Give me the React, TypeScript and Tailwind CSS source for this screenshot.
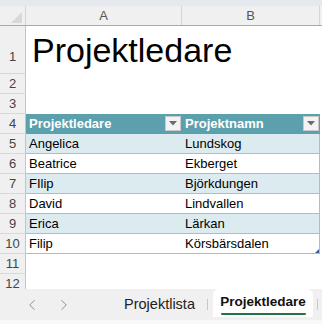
import React from 'react';
import { ChevronLeft, ChevronRight } from 'lucide-react';

const rows = [
  { a: 'Angelica', b: 'Lundskog' },
  { a: 'Beatrice', b: 'Ekberget' },
  { a: 'FIlip', b: 'Björkdungen' },
  { a: 'David', b: 'Lindvallen' },
  { a: 'Erica', b: 'Lärkan' },
  { a: 'Filip', b: 'Körsbärsdalen' },
];

const FilterButton = () => (
  <div className="w-[16px] h-[15px] bg-[#f3f3f3] border border-[#c9c9c9] flex items-center justify-center">
    <svg width="8" height="5" viewBox="0 0 8 5">
      <path d="M0 0 L8 0 L4 4.5 Z" fill="#6b6b6b" />
    </svg>
  </div>
);

const RowHeader = ({ n, h = 'h-[20px]', pb = 'pb-[1px]' }: { n: number; h?: string; pb?: string }) => (
  <div
    className={`w-[26px] ${h} ${pb} shrink-0 bg-[#f0f0f0] border-r border-b border-r-[#c4c4c4] border-b-[#d9d9d9] flex items-end justify-center text-[13px] leading-[16px] text-[#444]`}
  >
    {n}
  </div>
);

const App: React.FC = () => {
  return (
    <div
      className="w-[322px] h-[324px] overflow-hidden flex flex-col bg-white"
      style={{ fontFamily: '"Liberation Sans", Arial, sans-serif' }}
    >
      {/* Top strip */}
      <div className="h-[6px] bg-[#e5e8ee] shrink-0" />

      {/* Sheet */}
      <div className="h-[283px] overflow-hidden shrink-0 flex flex-col">
        {/* Column headers */}
        <div className="flex h-[20px] shrink-0 bg-[#f0f0f0] border-b border-[#a9a9a9] text-[13px] text-[#555]">
          <div className="w-[26px] shrink-0 border-r border-[#d4d4d4] flex items-end justify-end pr-[3px] pb-[2px]">
            <svg width="11" height="11" viewBox="0 0 11 11">
              <path d="M11 0 L11 11 L0 11 Z" fill="#d8d8d8" />
            </svg>
          </div>
          <div className="w-[156px] shrink-0 border-r border-[#d4d4d4] flex items-center justify-center">A</div>
          <div className="w-[138px] shrink-0 border-r border-[#d4d4d4] flex items-center justify-center">B</div>
          <div className="flex-1" />
        </div>

        {/* Row 1 - title */}
        <div className="flex h-[48px] shrink-0">
          <RowHeader n={1} h="h-[48px]" pb="pb-[8px]" />
          <div className="flex-1 flex items-end pl-[6px] pb-[4px] text-[34px] leading-[40px] text-black whitespace-nowrap">
            Projektledare
          </div>
        </div>

        {/* Rows 2-3 */}
        {[2, 3].map((n) => (
          <div key={n} className="flex h-[20px] shrink-0">
            <RowHeader n={n} />
            <div className="flex-1" />
          </div>
        ))}

        {/* Row 4 - table header */}
        <div className="flex h-[20px] shrink-0">
          <RowHeader n={4} />
          <div className="w-[156px] shrink-0 bg-[#5ca0ad] border-b border-[#5ca0ad] flex items-center justify-between pl-[3px] pr-[1px] text-white font-bold text-[13px]">
            <span>Projektledare</span>
            <FilterButton />
          </div>
          <div className="w-[138px] shrink-0 bg-[#5ca0ad] border-b border-[#5ca0ad] flex items-center justify-between pl-[3px] pr-[1px] text-white font-bold text-[13px]">
            <span>Projektnamn</span>
            <FilterButton />
          </div>
          <div className="flex-1" />
        </div>

        {/* Table body */}
        {rows.map((r, i) => {
          const shaded = i % 2 === 0;
          return (
            <div key={i} className="flex h-[20px] shrink-0">
              <RowHeader n={i + 5} />
              <div
                className={`w-[294px] shrink-0 flex border-b border-r border-[#9cc6cf] text-[13px] text-black relative ${
                  shaded ? 'bg-[#dcebef]' : 'bg-white'
                }`}
              >
                <div className="w-[156px] shrink-0 flex items-center pl-[3px]">{r.a}</div>
                <div className="flex-1 flex items-center pl-[3px]">{r.b}</div>
                {i === rows.length - 1 && (
                  <svg className="absolute right-0 bottom-0" width="4" height="4" viewBox="0 0 4 4">
                    <path d="M4 0 L4 4 L0 4 Z" fill="#2e5fb0" />
                  </svg>
                )}
              </div>
              <div className="flex-1" />
            </div>
          );
        })}

        {/* Rows 11-12 */}
        {[11, 12].map((n) => (
          <div key={n} className="flex h-[20px] shrink-0">
            <RowHeader n={n} />
            <div className="flex-1" />
          </div>
        ))}
      </div>

      {/* Sheet tabs */}
      <div className="h-[31px] shrink-0 bg-[#f0f0f0] flex items-stretch">
        <div className="w-[112px] shrink-0 flex items-center text-[#8e8e8e]">
          <ChevronLeft size={18} strokeWidth={1.3} className="ml-[23px]" />
          <ChevronRight size={18} strokeWidth={1.3} className="ml-[14px]" />
        </div>
        <div className="w-[95px] shrink-0 flex items-center justify-center text-[14.5px] text-[#222]">
          Projektlista
        </div>
        <div className="w-px h-[11px] self-center bg-[#c8c8c8]" />
        <div className="w-[5px]" />
        <div className="w-[100px] shrink-0 bg-white rounded-t-[6px] mb-[3px] flex flex-col items-center justify-center">
          <span className="text-[13.5px] font-bold text-[#111] leading-[16px] mt-[3px]">Projektledare</span>
          <div className="w-[85px] h-[2px] bg-[#217346] mt-[3px] rounded-full" />
        </div>
        <div className="w-[4px]" />
        <div className="w-px h-[11px] self-center bg-[#c8c8c8]" />
      </div>
      <div className="flex-1 bg-[#f8f8f8]" />
    </div>
  );
};

export default App;
